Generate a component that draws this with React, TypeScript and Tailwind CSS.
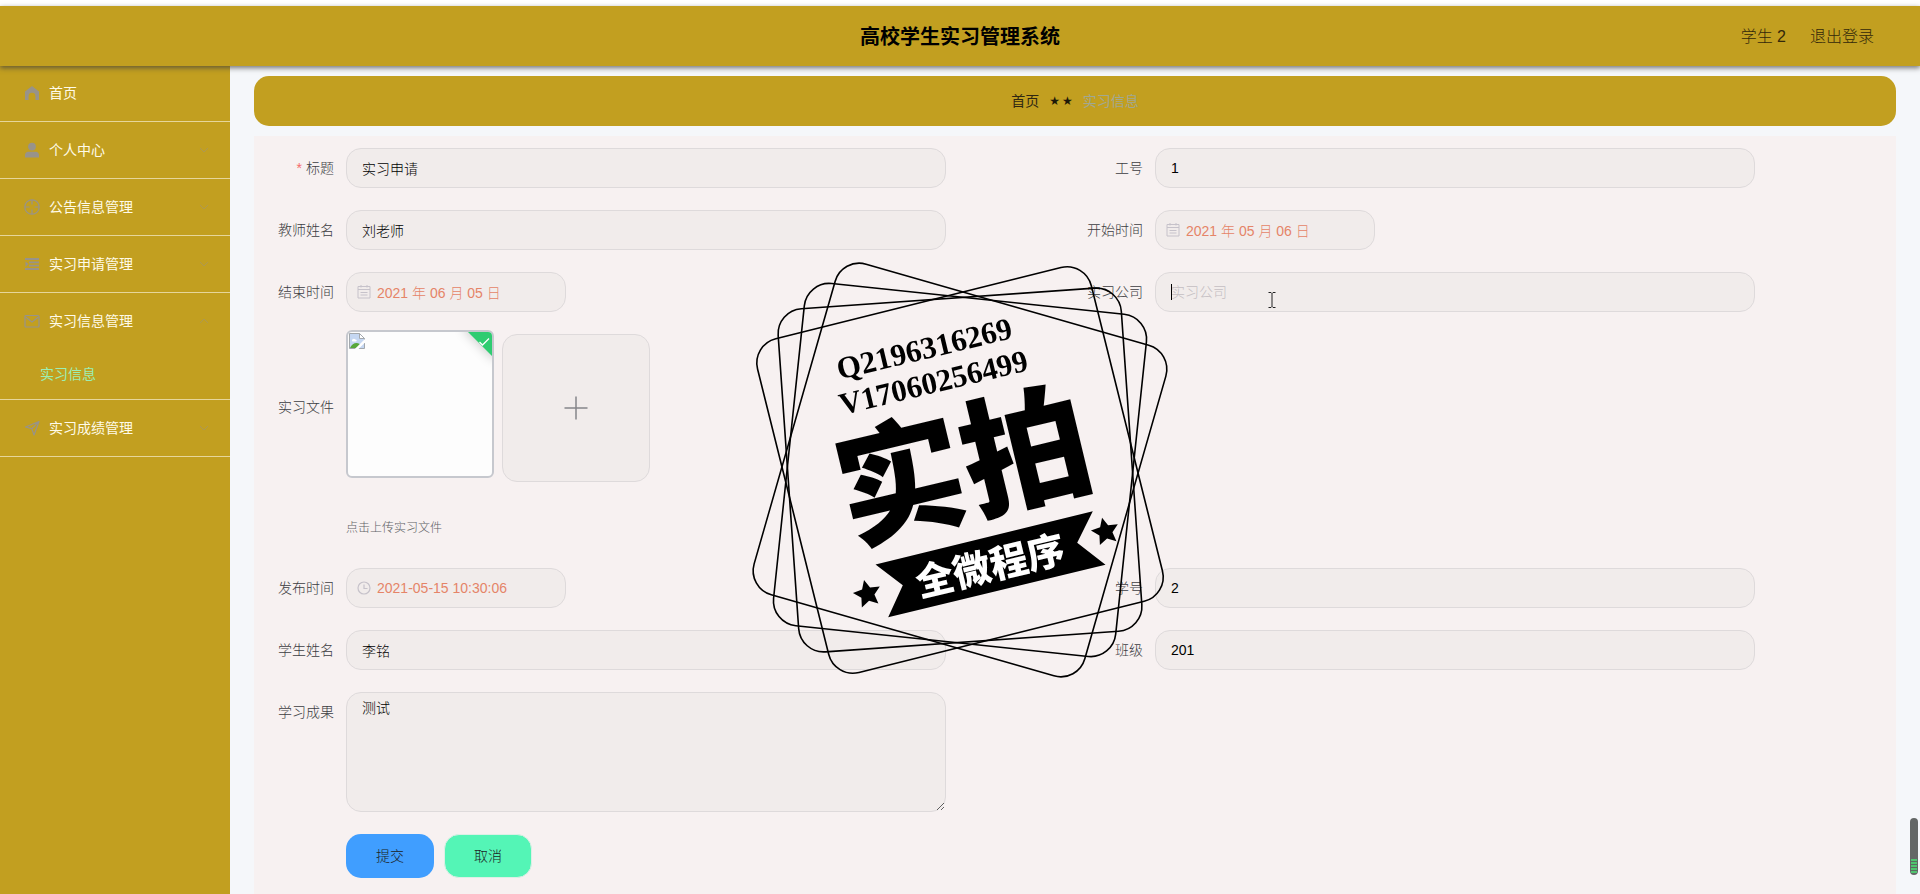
import { useState } from "react";
import type { ReactNode } from "react";

// ─── Icons ─────────────────────────────────────────────────────────────────────

type IconProps = { className?: string };

function HomeIcon({ className }: IconProps) {
  return (
    <svg viewBox="0 0 16 16" className={className} fill="currentColor" aria-hidden="true">
      <path d="M8 1 15 6.600V15h-3.600v-3.800a3.400 3.400 0 0 0-6.800 0V15H1V6.600z" />
    </svg>
  );
}

function UserIcon({ className }: IconProps) {
  return (
    <svg viewBox="0 0 16 16" className={className} fill="currentColor" aria-hidden="true">
      <circle cx="8" cy="4.600" r="3.900" />
      <path d="M1 15.500v-2.600C1 11 2.400 9.700 4.200 9.700h7.600c1.800 0 3.200 1.300 3.200 3.200v2.600z" />
    </svg>
  );
}

function AimIcon({ className }: IconProps) {
  return (
    <svg viewBox="0 0 16 16" className={className} fill="none" stroke="currentColor" strokeWidth="1.200" aria-hidden="true">
      <circle cx="8" cy="8" r="7.200" />
      <path d="M8 1v4.500M8 10.500V15M1 8h4.500M10.500 8H15" />
    </svg>
  );
}

function ListIcon({ className }: IconProps) {
  return (
    <svg viewBox="0 0 16 16" className={className} fill="none" stroke="currentColor" strokeWidth="1.800" aria-hidden="true">
      <path d="M1 3h14M5 6.400h10M5 9.700h10M1 13h14" />
      <path d="M1.500 5.500v5.200L4.500 8.100z" fill="currentColor" stroke="none" />
    </svg>
  );
}

function MessageIcon({ className }: IconProps) {
  return (
    <svg viewBox="0 0 16 16" className={className} fill="none" stroke="currentColor" strokeWidth="1.200" aria-hidden="true">
      <rect x="1" y="2.500" width="14" height="11.500" rx="1" />
      <path d="m1.500 4 6.500 5 6.500-5" />
    </svg>
  );
}

function PositionIcon({ className }: IconProps) {
  return (
    <svg viewBox="0 0 16 16" className={className} fill="none" stroke="currentColor" strokeWidth="1.200" strokeLinejoin="round" aria-hidden="true">
      <path d="M15 1.500 1.500 7l6.300 1.600L10 15zM15 1.500 7.800 8.600" />
    </svg>
  );
}

function ChevronIcon({ className, up }: IconProps & { up?: boolean }) {
  return (
    <svg viewBox="0 0 12 12" className={className} fill="none" stroke="currentColor" aria-hidden="true">
      <path d={up ? "m2 8 4-4 4 4" : "m2 4 4 4 4-4"} />
    </svg>
  );
}

function CalendarIcon({ className }: IconProps) {
  return (
    <svg viewBox="0 0 14 14" className={className} fill="none" stroke="currentColor" aria-hidden="true">
      <path d="M1 1.500h12v11.500H1zM1 4.500h12M3.500 7.500h7M3.500 10h7M4 0v2.500M10 0v2.500" />
    </svg>
  );
}

function ClockIcon({ className }: IconProps) {
  return (
    <svg viewBox="0 0 14 14" className={className} fill="none" stroke="currentColor" strokeWidth="1.200" aria-hidden="true">
      <circle cx="7" cy="7" r="6" />
      <path d="M7 3.500V7.500h3.500" />
    </svg>
  );
}

function BrokenImageIcon({ className }: IconProps) {
  return (
    <svg viewBox="0 0 16 16" className={className} aria-hidden="true">
      <path d="M.5.500h10l5 5v10H.5z" fill="#c5d7f2" stroke="#a3a8ad" />
      <path d="M3 7.500c0-1.700 2.500-2.500 3.200-1 1.600-.3 2.100 1.600.8 2H4c-.7 0-1-.5-1-1z" fill="#fff" />
      <path d="M1 15c1.500-3.500 4-5 6.500-5 2 0 3.500 1 4.500 2l-2.500 3z" fill="#59a83c" />
      <path d="M16 6v3.500L9.500 16H5.800z" fill="#fff" />
      <path d="M10.500.500v5h5z" fill="#fff" stroke="#a3a8ad" />
    </svg>
  );
}

// ─── Data ──────────────────────────────────────────────────────────────────────

type MenuItem = {
  label: string;
  Icon: (props: IconProps) => ReactNode;
  expandable?: boolean;
  children?: string[];
};

const MENU: MenuItem[] = [
  { label: "首页", Icon: HomeIcon },
  { label: "个人中心", Icon: UserIcon, expandable: true },
  { label: "公告信息管理", Icon: AimIcon, expandable: true },
  { label: "实习申请管理", Icon: ListIcon, expandable: true },
  { label: "实习信息管理", Icon: MessageIcon, expandable: true, children: ["实习信息"] },
  { label: "实习成绩管理", Icon: PositionIcon, expandable: true },
];

// ─── Layout ────────────────────────────────────────────────────────────────────

function Header() {
  return (
    <header className="relative z-10 grid h-[60px] shrink-0 grid-cols-[1fr_auto_1fr] items-center bg-[#c29f20] pt-[2px] shadow-[0_2px_5px_rgba(60,60,60,0.7)]">
      <h1 className="col-start-2 text-[20px] font-bold text-black">高校学生实习管理系统</h1>
      <div className="flex justify-end gap-6 pr-[46px] text-[16px] font-light text-[#33280a]">
        <span>学生 2</span>
        <a href="#logout">退出登录</a>
      </div>
    </header>
  );
}

function Sidebar() {
  return (
    <nav className="w-[230px] shrink-0 bg-[#c29f20] text-[14px] text-[#fffbe8]">
      <ul className="-mt-px">
        {MENU.map(({ label, Icon, expandable, children }) => (
          <li key={label} className="border-b border-[#e6d69b]">
            <a href="#menu" className="flex h-14 items-center pr-5 pl-6">
              <Icon className="h-4 w-4 text-[#98938a]" />
              <span className="ml-[9px] flex-1">{label}</span>
              {expandable && <ChevronIcon up={!!children} className="h-3 w-3 text-[#ad9852]" />}
            </a>
            {children?.map((child) => (
              <a key={child} href="#submenu" className="flex h-[50px] items-center pl-10 text-[#9bf0b4]">
                {child}
              </a>
            ))}
          </li>
        ))}
      </ul>
    </nav>
  );
}

function Breadcrumb() {
  return (
    <div className="flex h-[50px] items-center justify-center rounded-[15px] bg-[#c29f20] text-[14px]">
      <a href="#home" className="text-[#2f2712]">首页</a>
      <span className="mx-[10px] flex gap-[2px] font-['DejaVu_Sans',sans-serif] text-[12px] text-[#1d1808]">
        <span>★</span>
        <span>★</span>
      </span>
      <span className="text-[#a1a892]">实习信息</span>
    </div>
  );
}

// ─── Form pieces ───────────────────────────────────────────────────────────────

const INPUT_CLASS =
  "h-10 w-full rounded-[15px] border border-[#dedadb] bg-[#f1eceb] px-[15px] text-[14px] outline-none placeholder:text-[#c4bec2]";

const LABEL_CLASS = "w-20 shrink-0 pr-3 text-right text-[14px] font-light whitespace-nowrap text-[#3c3d42]";

function Field({ id, label, required, children }: { id: string; label: string; required?: boolean; children: ReactNode }) {
  return (
    <div className="flex min-w-0">
      <label htmlFor={id} className={`${LABEL_CLASS} leading-10`}>
        {required && <span className="mr-1 text-[#f56c6c]">*</span>}
        {label}
      </label>
      {children}
    </div>
  );
}

function TextField({ id, label, value, required, placeholder }: { id: string; label: string; value: string; required?: boolean; placeholder?: string }) {
  const [text, setText] = useState(value);
  return (
    <Field id={id} label={label} required={required}>
      <div className="relative w-full max-w-[600px]">
        <input
          id={id}
          value={text}
          placeholder={placeholder}
          onChange={(e) => setText(e.target.value)}
          className={`${INPUT_CLASS} font-light text-black`}
        />
        {placeholder && (
          <>
            <span className="absolute top-3 left-4 h-4 w-px bg-black" />
            <svg viewBox="0 0 8 16" className="absolute top-5 left-[113px] h-4 w-2" fill="none" stroke="#222" aria-hidden="true">
              <path d="M.5.500h2.500l1 1 1-1h2.500M4 1.500v13M.5 15.500h2.500l1-1 1 1h2.500" />
            </svg>
          </>
        )}
      </div>
    </Field>
  );
}

function DateField({ id, label, value, Icon }: { id: string; label: string; value: string; Icon: (props: IconProps) => ReactNode }) {
  return (
    <Field id={id} label={label}>
      <div className="relative w-[220px]">
        <Icon className="absolute top-[13px] left-[11px] h-[14px] w-[14px] text-[#c6c2ca]" />
        <input id={id} defaultValue={value} className={`${INPUT_CLASS} pl-[30px] font-light text-[#e58468]`} />
      </div>
    </Field>
  );
}

function UploadField() {
  return (
    <div className="flex items-start">
      <label htmlFor="file" className={`${LABEL_CLASS} leading-[154px]`}>
        实习文件
      </label>
      <div>
        <div className="flex gap-2">
          <div className="relative h-[148px] w-[148px] overflow-hidden rounded-md border-2 border-[#c6c8ce] bg-[#fdfdfd] p-px">
            <BrokenImageIcon className="h-4 w-4" />
            <span className="absolute -top-[9px] -right-[19px] h-6 w-[46px] rotate-45 bg-[#2fcc71] shadow-[0_1px_12px_rgba(0,0,0,0.2)]" />
            <svg viewBox="0 0 12 12" className="absolute top-1 right-[2px] h-3 w-3" fill="none" stroke="#fff" strokeWidth="1.300" aria-hidden="true">
              <path d="m1.500 6 3 3L11 2.500" />
            </svg>
          </div>
          <button
            type="button"
            id="file"
            aria-label="上传实习文件"
            className="mt-1 flex h-[148px] w-[148px] items-center justify-center rounded-[15px] border border-[#dedadb] bg-[#f1eceb] text-[#85858b]"
          >
            <svg viewBox="0 0 24 24" className="h-6 w-6" fill="none" stroke="currentColor" strokeWidth="1.500" aria-hidden="true">
              <path d="M12 .5v23M.5 12h23" />
            </svg>
          </button>
        </div>
        <p className="mt-9 text-[12px] leading-5 font-light text-[#606266]">点击上传实习文件</p>
      </div>
    </div>
  );
}

// ─── Stamp ─────────────────────────────────────────────────────────────────────

const FRAME_ANGLES = [16, 6, -4, -14];

const STAR = "0,-14.500 4.100,-5.700 13.800,-4.500 6.700,2.200 8.500,11.700 0,7 -8.500,11.700 -6.700,2.200 -13.800,-4.500 -4.100,-5.700";

function Stamp() {
  return (
    <svg
      viewBox="-215 -215 430 430"
      className="pointer-events-none fixed top-[255px] left-1/2 z-20 h-[430px] w-[430px] -translate-x-1/2"
    >
      {FRAME_ANGLES.map((angle) => (
        <rect
          key={angle}
          x="-172"
          y="-172"
          width="344"
          height="344"
          rx="25"
          fill="none"
          stroke="#000"
          strokeWidth="1.600"
          transform={`rotate(${angle})`}
        />
      ))}
      <polygon points="-84.500,94.500 132.800,41.200 117.200,72.800 145.500,94.800 -71.800,147.200 -57.200,115.200" />
      <g transform="rotate(-13.500)">
        <g className="font-['Liberation_Serif',serif] text-[31px] font-bold">
          <text x="-96" y="-116">Q2196316269</text>
          <text x="-102" y="-81">V17060256499</text>
        </g>
        <text
          x="4"
          y="44"
          textAnchor="middle"
          className="font-['Noto_Sans_CJK_SC',sans-serif] text-[128px] font-black"
        >
          实拍
        </text>
        <text
          x="7"
          y="114"
          textAnchor="middle"
          fill="#fff"
          className="font-['Noto_Sans_CJK_SC',sans-serif] text-[38px] font-black"
        >
          全微程序
        </text>
        <polygon points={STAR} transform="translate(-119 99)" />
        <polygon points={STAR} transform="translate(127 94)" />
      </g>
    </svg>
  );
}

// Battery-like scroll marker at the right edge of the window
function ScrollMarker() {
  return (
    <div className="fixed right-[2px] bottom-[19px] z-20 flex h-[57px] w-2 flex-col justify-end overflow-hidden rounded-full bg-[#636766] px-px pb-[2px]">
      <div className="h-[14px] bg-[repeating-linear-gradient(#4fc46f_0_2px,#5b6b60_2px_3px)]" />
    </div>
  );
}

// ─── App ───────────────────────────────────────────────────────────────────────

export default function App() {
  return (
    <div className="flex min-h-screen flex-col bg-white pt-[6px] font-['Liberation_Sans','Noto_Sans_CJK_SC',sans-serif]">
      <Header />
      <div className="flex flex-1 bg-[#f5f7fa]">
        <Sidebar />
        <main className="flex min-w-0 flex-1 flex-col gap-[10px] px-6 pt-[10px]">
          <Breadcrumb />
          <form className="flex-1 bg-[#f7f1f1] px-3 pt-3 pb-4" onSubmit={(e) => e.preventDefault()}>
            <div className="grid grid-cols-2 gap-y-[22px]">
              <TextField id="title" label="标题" value="实习申请" required />
              <TextField id="jobNo" label="工号" value="1" />
              <TextField id="teacher" label="教师姓名" value="刘老师" />
              <DateField id="start" label="开始时间" value="2021 年 05 月 06 日" Icon={CalendarIcon} />
              <DateField id="end" label="结束时间" value="2021 年 06 月 05 日" Icon={CalendarIcon} />
              <TextField id="company" label="实习公司" value="" placeholder="实习公司" />
            </div>
            <div className="mt-[18px] mb-[30px]">
              <UploadField />
            </div>
            <div className="grid grid-cols-2 gap-y-[22px]">
              <DateField id="published" label="发布时间" value="2021-05-15 10:30:06" Icon={ClockIcon} />
              <TextField id="studentNo" label="学号" value="2" />
              <TextField id="student" label="学生姓名" value="李铭" />
              <TextField id="class" label="班级" value="201" />
              <Field id="result" label="学习成果">
                <textarea
                  id="result"
                  defaultValue="测试"
                  className="h-[120px] w-full max-w-[600px] rounded-[15px] border border-[#dedadb] bg-[#f1eceb] px-[15px] py-[5px] text-[14px] leading-5 font-light text-black outline-none"
                />
              </Field>
            </div>
            <div className="mt-[22px] flex gap-[10px] pl-20 text-[14px] font-light text-[#1c1f24]">
              <button type="submit" className="h-11 w-[88px] rounded-[15px] bg-[#409eff]">
                提交
              </button>
              <button type="button" className="h-11 w-[88px] rounded-[15px] border border-[#dcefe6] bg-[#54f5b6]">
                取消
              </button>
            </div>
          </form>
        </main>
      </div>
      <Stamp />
      <ScrollMarker />
    </div>
  );
}
